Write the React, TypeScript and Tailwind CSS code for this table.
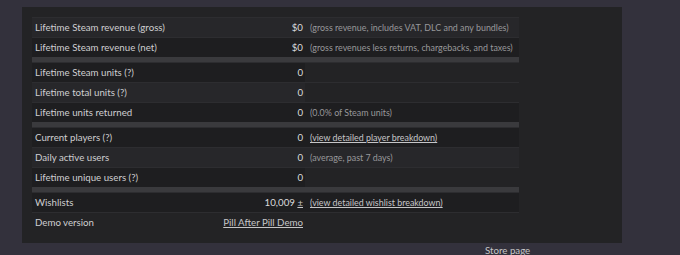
import React from "react";

type Row = {
  label: string;
  value: React.ReactNode;
  desc?: React.ReactNode;
  dark: boolean;
};

const Link = ({ children }: { children: React.ReactNode }) => (
  <span className="underline text-[#c6c6c8] underline-offset-[1px]">{children}</span>
);

const groups: Row[][] = [
  [
    { label: "Lifetime Steam revenue (gross)", value: "$0", desc: "(gross revenue, includes VAT, DLC and any bundles)", dark: false },
    { label: "Lifetime Steam revenue (net)", value: "$0", desc: "(gross revenues less returns, chargebacks, and taxes)", dark: true },
  ],
  [
    { label: "Lifetime Steam units (?)", value: "0", dark: true },
    { label: "Lifetime total units (?)", value: "0", dark: false },
    { label: "Lifetime units returned", value: "0", desc: "(0.0% of Steam units)", dark: true },
  ],
  [
    { label: "Current players (?)", value: "0", desc: <Link>(view detailed player breakdown)</Link>, dark: true },
    { label: "Daily active users", value: "0", desc: "(average, past 7 days)", dark: false },
    { label: "Lifetime unique users (?)", value: "0", dark: true },
  ],
  [
    {
      label: "Wishlists",
      value: (
        <span>
          10,009 <Link>±</Link>
        </span>
      ),
      desc: <Link>(view detailed wishlist breakdown)</Link>,
      dark: true,
    },
    { label: "Demo version", value: <Link>Pill After Pill Demo</Link>, dark: false },
  ],
];

function TableRow({ row, last }: { row: Row; last?: boolean }) {
  const bg = row.dark ? "bg-[#1e1e20]" : last ? "bg-[#232325]" : "bg-[#27272a]";
  return (
    <div className="flex h-[20px] border-t border-[#2d2d30]">
      <div className={`flex w-[273px] items-center justify-between pl-[3px] pr-[2px] ${bg}`}>
        <span className="text-[#cfcfd1]">{row.label}</span>
        <span className="text-[#dcdcde]">{row.value}</span>
      </div>
      <div
        className={`flex flex-1 items-center whitespace-nowrap pl-[5px] text-[8.9px] text-[#98989a] ${row.desc ? bg : ""}`}
      >
        {row.desc}
      </div>
    </div>
  );
}

export default function App() {
  return (
    <div
      className="h-[255px] w-[680px] overflow-hidden bg-[#33313c] text-[9.7px]"
      style={{ fontFamily: "Lato, 'Noto Sans', sans-serif" }}
    >
      <div className="ml-[22px] mt-[7px] w-[600px] bg-[#232325] pb-[11px] pl-[10px] pt-[10px]">
        <div className="w-[487px]">
          {groups.map((g, gi) => (
            <React.Fragment key={gi}>
              {gi > 0 && <div className="h-[5px] bg-[#3a3a3d]" />}
              {g.map((r, ri) => (
                <TableRow key={ri} row={r} last={gi === 3 && ri === 1} />
              ))}
            </React.Fragment>
          ))}
        </div>
      </div>
      <div className="ml-[485px] mt-[1px] text-[9.7px] leading-[12px] text-[#c6c6c8] underline">Store page</div>
    </div>
  );
}
